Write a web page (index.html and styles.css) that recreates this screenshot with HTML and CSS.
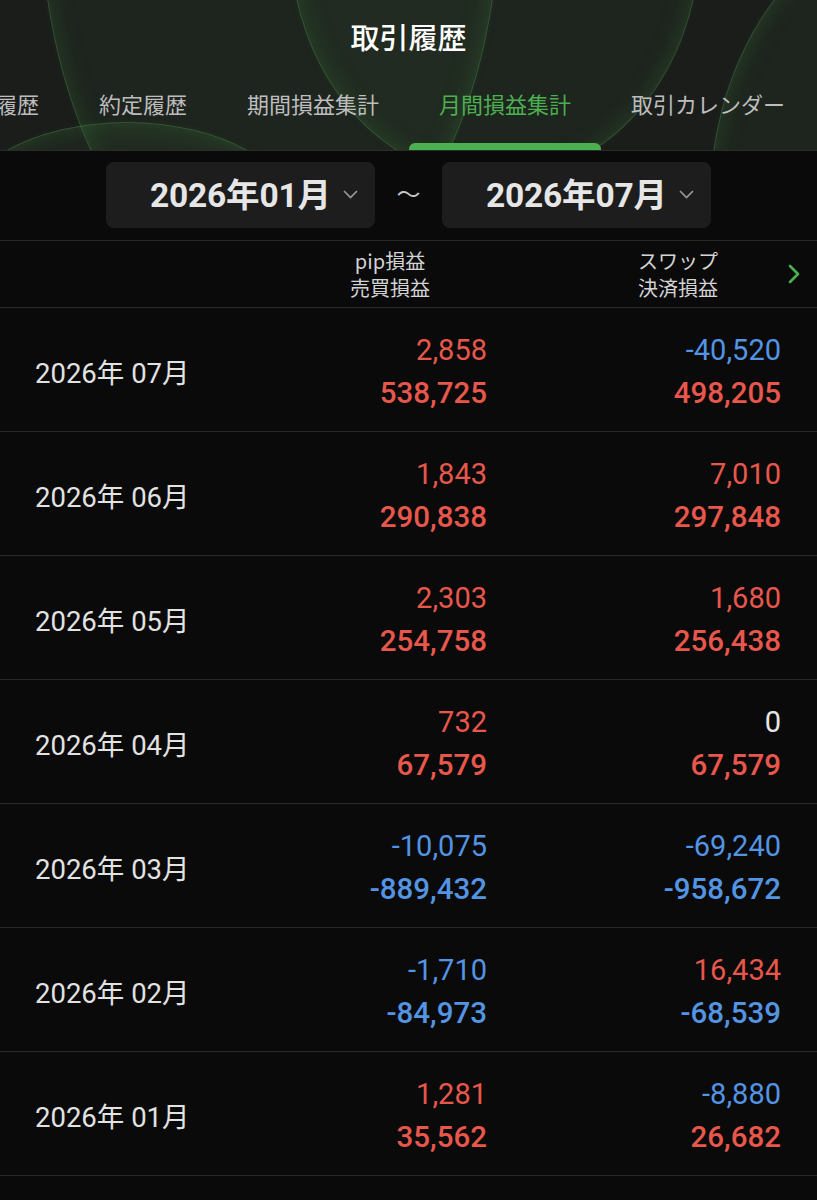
FILE: index.html
```html
<!DOCTYPE html>
<html lang="ja">
<head>
<meta charset="utf-8">
<title>取引履歴</title>
<link rel="stylesheet" href="styles.css">
</head>
<body>
<div class="app">
  <header class="top">
    <div class="glow">
      <span class="orb orb1"></span>
      <span class="orb orb2"></span>
      <span class="orb orb3"></span>
      <span class="orb orb4"></span>
    </div>
    <h1 class="title">取引履歴</h1>
    <nav class="tabs">
      <span class="tab">注文履歴</span>
      <span class="tab">約定履歴</span>
      <span class="tab">期間損益集計</span>
      <span class="tab active">月間損益集計</span>
      <span class="tab">取引カレンダー</span>
    </nav>
  </header>

  <section class="range">
    <div class="picker">
      <span class="picker-text">2026年01月</span>
      <svg class="caret" width="15" height="9" viewBox="0 0 15 9"><path d="M1 1 L7.5 7.5 L14 1" fill="none" stroke="#9a9a9a" stroke-width="1.6"/></svg>
    </div>
    <span class="tilde">～</span>
    <div class="picker">
      <span class="picker-text">2026年07月</span>
      <svg class="caret" width="15" height="9" viewBox="0 0 15 9"><path d="M1 1 L7.5 7.5 L14 1" fill="none" stroke="#9a9a9a" stroke-width="1.6"/></svg>
    </div>
  </section>

  <div class="grid thead">
    <div></div>
    <div class="th"><div>pip損益</div><div>売買損益</div></div>
    <div class="th th2"><div>スワップ</div><div>決済損益</div></div>
    <svg class="more" width="12" height="20" viewBox="0 0 12 20"><path d="M2 2 L10 10 L2 18" fill="none" stroke="#4caf50" stroke-width="2.6" stroke-linecap="round" stroke-linejoin="round"/></svg>
  </div>

  <div class="grid row">
    <div class="month">2026年 07月</div>
    <div class="nums"><span class="pip red">2,858</span><span class="pl red">538,725</span></div>
    <div class="nums"><span class="pip blue">-40,520</span><span class="pl red">498,205</span></div>
  </div>
  <div class="grid row">
    <div class="month">2026年 06月</div>
    <div class="nums"><span class="pip red">1,843</span><span class="pl red">290,838</span></div>
    <div class="nums"><span class="pip red">7,010</span><span class="pl red">297,848</span></div>
  </div>
  <div class="grid row">
    <div class="month">2026年 05月</div>
    <div class="nums"><span class="pip red">2,303</span><span class="pl red">254,758</span></div>
    <div class="nums"><span class="pip red">1,680</span><span class="pl red">256,438</span></div>
  </div>
  <div class="grid row">
    <div class="month">2026年 04月</div>
    <div class="nums"><span class="pip red">732</span><span class="pl red">67,579</span></div>
    <div class="nums"><span class="pip white">0</span><span class="pl red">67,579</span></div>
  </div>
  <div class="grid row">
    <div class="month">2026年 03月</div>
    <div class="nums"><span class="pip blue">-10,075</span><span class="pl blue">-889,432</span></div>
    <div class="nums"><span class="pip blue">-69,240</span><span class="pl blue">-958,672</span></div>
  </div>
  <div class="grid row">
    <div class="month">2026年 02月</div>
    <div class="nums"><span class="pip blue">-1,710</span><span class="pl blue">-84,973</span></div>
    <div class="nums"><span class="pip red">16,434</span><span class="pl blue">-68,539</span></div>
  </div>
  <div class="grid row">
    <div class="month">2026年 01月</div>
    <div class="nums"><span class="pip red">1,281</span><span class="pl red">35,562</span></div>
    <div class="nums"><span class="pip blue">-8,880</span><span class="pl red">26,682</span></div>
  </div>
</div>
</body>
</html>
```

FILE: styles.css
```css
* { box-sizing: border-box; }
html, body {
  margin: 0;
  padding: 0;
  background: #0a0a0a;
}
body {
  font-family: Roboto, "Noto Sans CJK JP", sans-serif;
  color: #e2e2e2;
  width: 817px;
  overflow: hidden;
}
.app { width: 817px; }

/* header */
.top {
  position: relative;
  height: 151px;
  background: #1b1d1b;
  border-bottom: 1px solid #2c2c2c;
  overflow: hidden;
}
.glow { position: absolute; inset: 0; pointer-events: none; }
.orb {
  position: absolute;
  border-radius: 50%;
  border: 1px solid rgba(95, 185, 95, 0.3);
  background: rgba(90, 170, 90, 0.055);
  box-shadow: inset 0 0 28px rgba(76, 175, 80, 0.2), 0 0 10px rgba(76, 175, 80, 0.06);
}
.orb1 { left: 40px; top: -500px; width: 460px; height: 800px; }
.orb2 { left: 290px; top: -300px; width: 410px; height: 480px; }
.orb3 { left: -46px; top: 122px; width: 346px; height: 200px; }
.orb4 { left: 710px; top: -100px; width: 500px; height: 600px; }

.title {
  position: relative;
  margin: 0;
  height: 75px;
  line-height: 72px;
  text-align: center;
  font-size: 29px;
  font-weight: 500;
  color: #ffffff;
  font-family: "Noto Sans CJK JP", sans-serif;
}
.tabs {
  position: relative;
  display: flex;
  margin-left: -79px;
  height: 75px;
  white-space: nowrap;
}
.tab {
  position: relative;
  padding: 0 30px;
  height: 75px;
  line-height: 56px;
  font-size: 22px;
  color: #bdbdbd;
  font-family: "Noto Sans CJK JP", sans-serif;
}
.tab.active { color: #4caf50; }
.tab.active::after {
  content: "";
  position: absolute;
  left: 0;
  right: 0;
  bottom: 0;
  height: 7px;
  border-radius: 6px 6px 0 0;
  background: #4caf50;
}

/* range */
.range {
  display: flex;
  justify-content: center;
  align-items: center;
  height: 90px;
  padding-bottom: 2px;
  border-bottom: 1px solid #2a2a2a;
}
.picker {
  display: flex;
  align-items: center;
  gap: 12px;
  width: 269px;
  height: 66px;
  padding-left: 44px;
  padding-bottom: 4px;
  background: #1d1d1d;
  border-radius: 8px;
}
.picker-text {
  font-size: 33.5px;
  font-weight: 700;
  color: #e6e6e6;
  letter-spacing: -0.2px;
}
.caret { margin-top: 4px; }
.tilde {
  width: 67px;
  text-align: center;
  font-size: 24px;
  color: #c4c4c4;
  padding-bottom: 5px;
  font-family: "Noto Sans CJK JP", sans-serif;
}

/* table */
.grid {
  display: grid;
  grid-template-columns: 258px 194px 294px 1fr;
  padding-left: 35px;
  align-items: center;
  border-bottom: 1px solid #2a2a2a;
}
.thead { height: 67px; }
.th {
  text-align: center;
  font-size: 20px;
  line-height: 27px;
  color: #d4d4d4;
  font-family: "Noto Sans CJK JP", sans-serif;
}
.th2 { padding-left: 88px; }
.more { margin-left: 7px; }

.row { height: 124px; }
.month {
  font-size: 27.5px;
  color: #e2e2e2;
  padding-top: 2px;
}
.nums {
  display: flex;
  flex-direction: column;
  align-items: flex-end;
  padding-top: 4px;
}
.pip {
  font-size: 29px;
  line-height: 43px;
}
.pl {
  font-size: 29.5px;
  font-weight: 500;
  line-height: 43px;
}
.red { color: #e8574b; }
.blue { color: #5394e3; }
.white { color: #e6e6e6; }
```
